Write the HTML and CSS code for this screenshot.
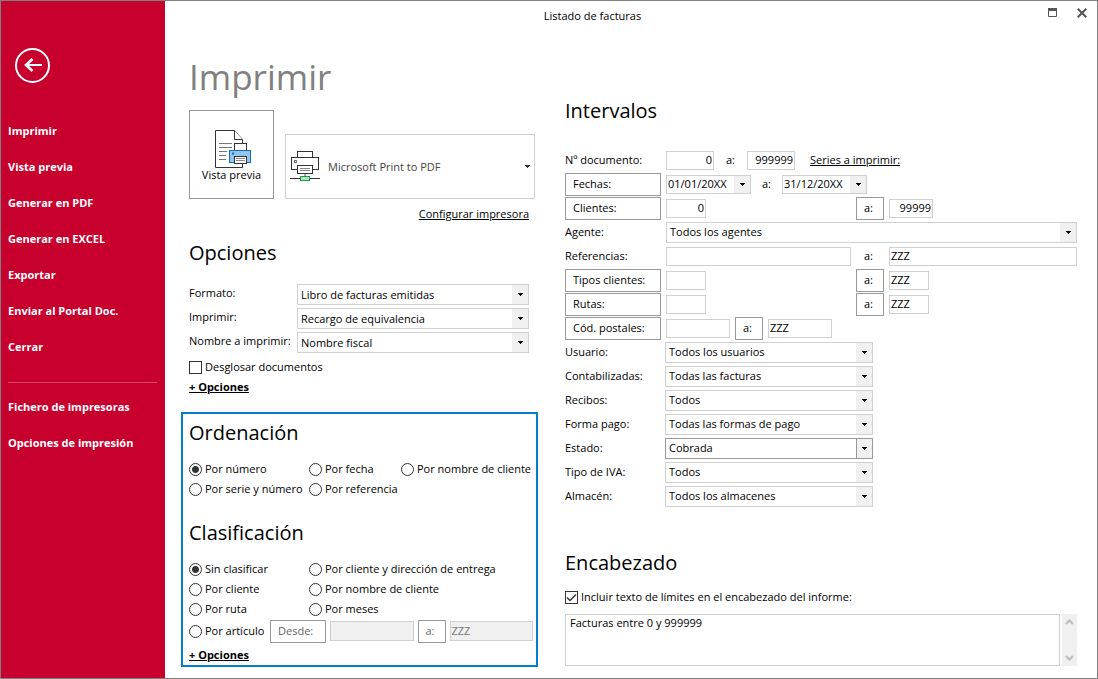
FILE: index.html
```html
<!DOCTYPE html>
<html lang="es">
<head>
<meta charset="utf-8">
<title>Listado de facturas</title>
<link rel="stylesheet" href="styles.css">
</head>
<body>
<div class="window">
  <aside class="sidebar">
    <button class="back" type="button" aria-label="Volver">
      <svg width="35" height="35" viewBox="0 0 35 35" fill="none" stroke="#fff">
        <circle cx="17.500" cy="17.500" r="16.500" stroke-width="2"/>
        <path d="M10 17H27" stroke-width="2"/>
        <path d="M17.500 11L11 17L17.500 23" stroke-width="2.600"/>
      </svg>
    </button>
    <nav class="menu">
      <a href="#">Imprimir</a>
      <a href="#">Vista previa</a>
      <a href="#">Generar en PDF</a>
      <a href="#">Generar en EXCEL</a>
      <a href="#">Exportar</a>
      <a href="#">Enviar al Portal Doc.</a>
      <a href="#">Cerrar</a>
      <hr>
      <a href="#">Fichero de impresoras</a>
      <a href="#">Opciones de impresión</a>
    </nav>
  </aside>

  <main class="main">
    <header class="titlebar">
      <div class="caption">Listado de facturas</div>
      <div class="window-buttons">
        <button type="button" aria-label="Maximizar"><svg width="9" height="9" viewBox="0 0 9 9"><path d="M.5 1V8.500H8.500V1" fill="none" stroke="#555"/><path d="M0 0H9V3H0Z" fill="#555"/></svg></button>
        <button type="button" aria-label="Cerrar"><svg width="10" height="10" viewBox="0 0 10 10"><path d="M.7.7L9.300 9.300M9.300.7L.7 9.300" stroke="#555" stroke-width="2"/></svg></button>
      </div>
    </header>

    <div class="columns">
      <div class="left">
        <section class="block">
          <h1>Imprimir</h1>
          <div class="printer-row">
            <button class="preview" type="button">
              <svg width="37" height="38" viewBox="0 0 37 38" fill="#fff" stroke="#333">
                <path d="M.5.500H19.500L27.500 9.500V37.500H.5Z"/>
                <path d="M19.500.500V9.500H27.500"/>
                <path d="M4 13.500H17M4 17.500H17M4 21.500H12M4 25.500H11M4 29.500H11" stroke="#777"/>
                <rect x="19.500" y="13.500" width="12" height="8"/>
                <rect x="14.500" y="20.500" width="21" height="12" fill="#92c5ee" stroke="#1b6cb8"/>
                <path d="M17 23.500H19" stroke="#1b6cb8" stroke-width="2"/>
                <rect x="19.500" y="26.500" width="12" height="7"/>
                <path d="M21 28.500H30M21 30.500H30" stroke="#888"/>
              </svg>
              <span>Vista previa</span>
            </button>
            <div class="printer">
              <svg class="printer-icon" width="30" height="31" viewBox="0 0 30 31" fill="#fff" stroke="#333">
                <rect x="7.500" y=".5" width="15" height="8"/>
                <rect x="1.500" y="6.500" width="27" height="12"/>
                <rect x="4.500" y="9.500" width="2" height="2" stroke="#777"/>
                <rect x="7.500" y="14.500" width="15" height="8"/>
                <path d="M10 17.500H20M10 19.500H20" stroke="#888"/>
                <path d="M15 23V26" stroke="#aaa" stroke-width="2"/>
                <path d="M0 27.500H30"/>
                <rect x="10.500" y="25.500" width="9" height="4" fill="#b7e3c0" stroke="#169c46"/>
              </svg>
              <select aria-label="Impresora"><option>Microsoft Print to PDF</option></select>
            </div>
          </div>
          <div class="configure"><a href="#">Configurar impresora</a></div>

          <h2>Opciones</h2>
          <div class="options">
            <label for="formato">Formato:</label>
            <select id="formato"><option>Libro de facturas emitidas</option></select>
            <label for="imprimir">Imprimir:</label>
            <select id="imprimir"><option>Recargo de equivalencia</option></select>
            <label for="nombre">Nombre a imprimir:</label>
            <select id="nombre"><option>Nombre fiscal</option></select>
          </div>
          <label class="choice breakdown"><input type="checkbox">Desglosar documentos</label>
          <a class="more" href="#">+ Opciones</a>
        </section>

        <section class="block sorting">
          <h2>Ordenación</h2>
          <div class="choices order">
            <label class="choice"><input type="radio" name="orden" checked>Por número</label>
            <label class="choice"><input type="radio" name="orden">Por fecha</label>
            <label class="choice"><input type="radio" name="orden">Por nombre de cliente</label>
            <label class="choice"><input type="radio" name="orden">Por serie y número</label>
            <label class="choice"><input type="radio" name="orden">Por referencia</label>
          </div>
          <h2 class="second">Clasificación</h2>
          <div class="choices classify">
            <label class="choice"><input type="radio" name="clase" checked>Sin clasificar</label>
            <label class="choice"><input type="radio" name="clase">Por cliente y dirección de entrega</label>
            <label class="choice"><input type="radio" name="clase">Por cliente</label>
            <label class="choice"><input type="radio" name="clase">Por nombre de cliente</label>
            <label class="choice"><input type="radio" name="clase">Por ruta</label>
            <label class="choice"><input type="radio" name="clase">Por meses</label>
          </div>
          <div class="article">
            <label class="choice"><input type="radio" name="clase">Por artículo</label>
            <button class="btn from" type="button" disabled>Desde:</button>
            <input class="field grow" type="text" aria-label="Artículo desde" disabled>
            <button class="btn to" type="button" disabled>a:</button>
            <input class="field grow" type="text" aria-label="Artículo hasta" value="ZZZ" disabled>
          </div>
          <a class="more" href="#">+ Opciones</a>
        </section>
      </div>

      <div class="right">
        <h2>Intervalos</h2>
        <div class="ranges">
          <div class="row">
            <label for="doc1">Nº documento:</label>
            <div class="inline docs">
              <input class="field w48 num" id="doc1" type="text" value="0">
              <label for="doc2">a:</label>
              <input class="field w48 num" id="doc2" type="text" value="999999">
              <a class="series" href="#">Series a imprimir:</a>
            </div>
          </div>
          <div class="row">
            <button class="btn" type="button">Fechas:</button>
            <div class="inline dates">
              <select class="date" aria-label="Fecha inicial"><option>01/01/20XX</option></select>
              <label for="fecha2">a:</label>
              <select class="date" id="fecha2"><option>31/12/20XX</option></select>
            </div>
          </div>
          <div class="row pair">
            <button class="btn" type="button">Clientes:</button>
            <input class="field w40 num" type="text" value="0" aria-label="Cliente inicial">
            <button class="btn to" type="button">a:</button>
            <input class="field w44 num" type="text" value="99999" aria-label="Cliente final">
          </div>
          <div class="row">
            <label for="agente">Agente:</label>
            <select id="agente"><option>Todos los agentes</option></select>
          </div>
          <div class="row pair">
            <label for="ref1">Referencias:</label>
            <input class="field" id="ref1" type="text">
            <label class="mid" for="ref2">a:</label>
            <input class="field" id="ref2" type="text" value="ZZZ">
          </div>
          <div class="row pair">
            <button class="btn" type="button">Tipos clientes:</button>
            <input class="field w40" type="text" aria-label="Tipo de cliente inicial">
            <button class="btn to" type="button">a:</button>
            <input class="field w40" type="text" value="ZZZ" aria-label="Tipo de cliente final">
          </div>
          <div class="row pair">
            <button class="btn" type="button">Rutas:</button>
            <input class="field w40" type="text" aria-label="Ruta inicial">
            <button class="btn to" type="button">a:</button>
            <input class="field w40" type="text" value="ZZZ" aria-label="Ruta final">
          </div>
          <div class="row">
            <button class="btn" type="button">Cód. postales:</button>
            <div class="inline postal">
              <input class="field w64" type="text" aria-label="Código postal inicial">
              <button class="btn to" type="button">a:</button>
              <input class="field w64" type="text" value="ZZZ" aria-label="Código postal final">
            </div>
          </div>
          <div class="row filter"><label for="usuario">Usuario:</label><select id="usuario"><option>Todos los usuarios</option></select></div>
          <div class="row filter"><label for="contab">Contabilizadas:</label><select id="contab"><option>Todas las facturas</option></select></div>
          <div class="row filter"><label for="recibos">Recibos:</label><select id="recibos"><option>Todos</option></select></div>
          <div class="row filter"><label for="pago">Forma pago:</label><select id="pago"><option>Todas las formas de pago</option></select></div>
          <div class="row filter"><label for="estado">Estado:</label><select class="active" id="estado"><option>Cobrada</option></select></div>
          <div class="row filter"><label for="iva">Tipo de IVA:</label><select id="iva"><option>Todos</option></select></div>
          <div class="row filter"><label for="almacen">Almacén:</label><select id="almacen"><option>Todos los almacenes</option></select></div>
        </div>

        <h2>Encabezado</h2>
        <label class="choice include"><input type="checkbox" checked>Incluir texto de límites en el encabezado del informe:</label>
        <div class="memo">
          <textarea aria-label="Texto del encabezado">Facturas entre 0 y 999999</textarea>
          <div class="scroll">
            <svg width="9" height="6" viewBox="0 0 9 6" fill="none" stroke="#bdbdbd" stroke-width="2"><path d="M1 5L4.500 1.500L8 5"/></svg>
            <svg width="9" height="6" viewBox="0 0 9 6" fill="none" stroke="#bdbdbd" stroke-width="2"><path d="M1 1L4.500 4.500L8 1"/></svg>
          </div>
        </div>
      </div>
    </div>
  </main>
</div>
</body>
</html>
```

FILE: styles.css
```css
* { box-sizing: border-box; }

body {
  margin: 0;
  background: #fff;
  color: #000;
  font: 11px/16px "Open Sans", "Noto Sans", sans-serif;
}

button, input, select, textarea {
  margin: 0;
  font: inherit;
  color: inherit;
  border-radius: 0;
}

a { color: inherit; }

.window {
  display: flex;
  min-height: 100vh;
  border: 1px solid #808080;
}

/* Sidebar */
.sidebar {
  flex: 0 0 164px;
  padding: 47px 8px 0 7px;
  background: #c8002d;
  color: #fff;
}

.back {
  display: block;
  margin: 0 7px 30px;
  padding: 0;
  border: 0;
  background: none;
}

.back svg { display: block; }

.menu a {
  display: block;
  line-height: 36px;
  font-weight: 700;
  text-decoration: none;
}

.menu hr {
  height: 1px;
  margin: 17px 0 6px;
  border: 0;
  background: #d8476a;
}

/* Title bar */
.main {
  flex: 1;
  min-width: 0;
}

.titlebar {
  display: flex;
  height: 31px;
}

.caption {
  flex: 1;
  line-height: 30px;
  text-align: center;
}

.window-buttons {
  display: flex;
  margin: 0 1px 0 18px;
}

.window-buttons button {
  display: flex;
  align-items: center;
  justify-content: center;
  width: 29px;
  height: 23px;
  padding: 0;
  border: 0;
  background: none;
}

.columns {
  display: grid;
  grid-template-columns: minmax(0, 357fr) minmax(0, 512fr);
  column-gap: 27px;
  padding: 0 20px 11px 16px;
}

h1 {
  margin: 20px 0 8px;
  color: #808080;
  font-size: 35px;
  font-weight: 400;
  line-height: 50px;
}

h2 {
  margin: 0;
  font-size: 20px;
  font-weight: 400;
  line-height: 30px;
}

/* Form controls */
select {
  width: 100%;
  height: 21px;
  padding: 0 18px 0 3px;
  border: 1px solid #d0d0d0;
  appearance: none;
  background:
    url("data:image/svg+xml,%3Csvg xmlns='http://www.w3.org/2000/svg' width='5' height='3'%3E%3Cpath d='M0 0h5v1h-1v1h-1v1h-1v-1h-1v-1h-1z'/%3E%3C/svg%3E") right 5px center no-repeat,
    linear-gradient(#f0f0f0, #f0f0f0) right / 16px 100% no-repeat,
    #fff;
}

.field {
  width: 100%;
  min-width: 0;
  height: 19px;
  padding: 0 1px 2px;
  border: 1px solid #d0d0d0;
  background: #fff;
}

.btn {
  height: 23px;
  padding: 0 7px;
  border: 1px solid #999;
  background: #fff;
  text-align: left;
}

.btn.to {
  width: 28px;
  flex: none;
}

.field:disabled {
  height: 20px;
  background: #f0f0f0;
  color: #777;
}

.btn:disabled { color: #666; }

.num { text-align: right; }

.w40 { width: 40px; }
.w44 { width: 44px; }
.w48 { width: 48px; }
.w64 { width: 64px; }

.choice {
  display: flex;
  align-items: center;
  gap: 3px;
  height: 20px;
  white-space: nowrap;
}

.choice input {
  flex: none;
  width: 13px;
  height: 13px;
  border: 1px solid #333;
  appearance: none;
  background: #fff;
}

.choice input[type="radio"] { border-radius: 50%; }

.choice input[type="radio"]:checked {
  background: radial-gradient(circle, #333 3px, #fff 4px);
}

.choice input[type="checkbox"]:checked {
  background: url("data:image/svg+xml,%3Csvg xmlns='http://www.w3.org/2000/svg' width='11' height='11' fill='none' stroke='%23333' stroke-width='1.500'%3E%3Cpath d='M1 5.500L4 8.500L10 2.500'/%3E%3C/svg%3E") center no-repeat;
}

.more {
  display: table;
  line-height: 20px;
  font-weight: 700;
}

/* Left column */
.block { padding: 0 9px 0 8px; }

.printer-row {
  display: flex;
  align-items: flex-end;
  gap: 11px;
  margin-right: -6px;
}

.preview {
  display: flex;
  flex: none;
  flex-direction: column;
  align-items: center;
  width: 85px;
  height: 89px;
  padding: 19px 0 0;
  border: 1px solid #999;
  background: #fff;
  line-height: 14px;
}

.preview svg { margin-left: 4px; }

.printer {
  position: relative;
  flex: 1;
}

.printer select {
  display: block;
  height: 65px;
  padding-left: 42px;
  color: #444;
  background:
    url("data:image/svg+xml,%3Csvg xmlns='http://www.w3.org/2000/svg' width='5' height='3'%3E%3Cpath d='M0 0h5v1h-1v1h-1v1h-1v-1h-1v-1h-1z' fill='%23333'/%3E%3C/svg%3E") right 4px center no-repeat,
    #fff;
}

.printer-icon {
  position: absolute;
  top: 17px;
  left: 5px;
  pointer-events: none;
}

.configure {
  margin: 7px 0 16px;
  text-align: right;
}

.options {
  display: grid;
  grid-template-columns: 108px minmax(0, 1fr);
  row-gap: 3px;
  margin: 16px 0 4px;
}

.options label {
  line-height: 18px;
  white-space: nowrap;
}

.sorting {
  margin-top: 15px;
  padding: 4px 3px 0 6px;
  border: 2px solid #0080c8;
}

.choices {
  display: grid;
  margin-top: 11px;
}

.order { grid-template-columns: 120px 92px 1fr; }
.classify { grid-template-columns: 120px 1fr; }
.second { margin-top: 19px; }

.article {
  display: flex;
  align-items: center;
  gap: 4px;
  height: 24px;
  margin-bottom: 2px;
}

.article .choice { flex: 0 0 77px; }
.article .from { flex: 0 0 56px; }

.grow {
  flex: 1;
  width: 0;
}

/* Right column */
.right { padding-top: 64px; }

.ranges { margin: 22px 0 40px; }

.row {
  display: grid;
  grid-template-columns: 96px minmax(0, 1fr);
  align-items: center;
  column-gap: 5px;
  height: 24px;
}

.pair { grid-template-columns: 96px minmax(0, 185fr) 28px minmax(0, 188fr); }

.filter {
  grid-template-columns: 96px 208px;
  column-gap: 4px;
}

.inline {
  display: flex;
  align-items: center;
}

.docs { gap: 12px; }
.dates { gap: 11px; }
.postal { gap: 5px; }
.series { margin-left: 3px; }

.date {
  width: 85px;
  height: 19px;
  padding-left: 1px;
}

.mid { padding-left: 8px; }

.active {
  border-color: #999;
  background:
    url("data:image/svg+xml,%3Csvg xmlns='http://www.w3.org/2000/svg' width='5' height='3'%3E%3Cpath d='M0 0h5v1h-1v1h-1v1h-1v-1h-1v-1h-1z'/%3E%3C/svg%3E") right 5px center no-repeat,
    linear-gradient(#f0f0f0, #f0f0f0) right / 15px 100% no-repeat,
    linear-gradient(#999, #999) right / 16px 100% no-repeat,
    #fff;
}

.include { margin: 9px 0 7px; }

.memo {
  display: flex;
  gap: 2px;
  height: 52px;
}

.memo textarea {
  flex: 1;
  padding: 0 4px;
  border: 1px solid #d0d0d0;
  outline: 0;
  overflow: hidden;
  resize: none;
}

.scroll {
  display: flex;
  flex-direction: column;
  align-items: center;
  justify-content: space-between;
  width: 15px;
  padding: 5px 0;
  background: #f0f0f0;
}
```
